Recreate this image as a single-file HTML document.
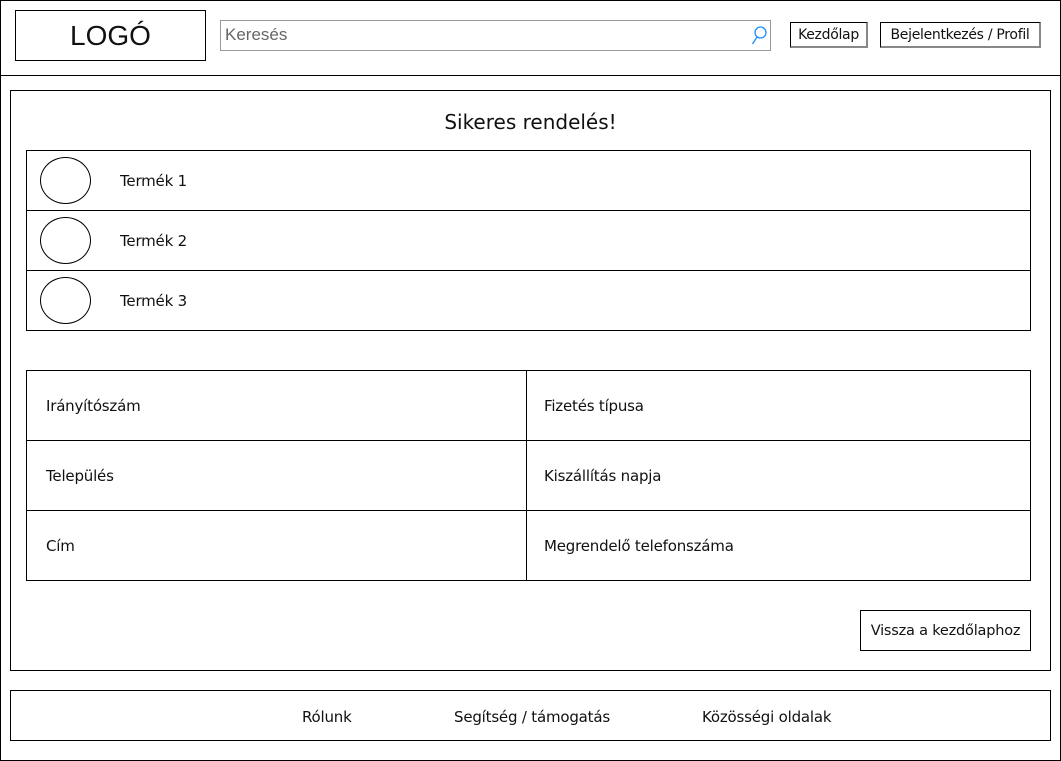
<!DOCTYPE html>
<html><head><meta charset="utf-8"><style>
*{box-sizing:border-box;margin:0;padding:0}
body{width:1061px;height:761px;position:relative;background:#fff;font-family:"DejaVu Sans","Liberation Sans",sans-serif;color:#111;overflow:hidden}
.a{position:absolute}
.b{position:absolute;border:1px solid #000}
.t{position:absolute;font-size:15px;line-height:16px;white-space:nowrap;letter-spacing:-0.2px}
</style></head><body>
<div class="b" style="left:0;top:0;width:1061px;height:761px"></div>
<div class="a" style="left:0;top:75px;width:1061px;height:1px;background:#000"></div>
<div class="b" style="left:15px;top:10px;width:191px;height:51px;font-family:'Liberation Sans',sans-serif;font-size:28px;text-align:center;line-height:49px">LOGÓ</div>
<div class="a" style="left:220px;top:20px;width:551px;height:31px;border:1px solid #999"></div>
<div class="a" style="left:225px;top:25px;font-family:'Liberation Sans',sans-serif;font-size:17px;color:#666;line-height:20px">Keresés</div>
<svg class="a" style="left:750px;top:25px" width="18" height="22" viewBox="0 0 18 22"><circle cx="10.5" cy="7.5" r="5.5" fill="none" stroke="#1e90ff" stroke-width="1.3"/><path d="M7 12 L2.5 19" stroke="#1e90ff" stroke-width="1.3"/></svg>
<div class="b" style="left:790px;top:22px;width:78px;height:26px;border-bottom:2px solid #888;border-right:2px solid #888;font-size:14px;line-height:24px;text-align:center;letter-spacing:-0.3px">Kezdőlap</div>
<div class="b" style="left:880px;top:22px;width:161px;height:26px;border-bottom:2px solid #888;border-right:2px solid #888;font-size:14px;line-height:24px;text-align:center;letter-spacing:-0.3px">Bejelentkezés / Profil</div>

<div class="b" style="left:10px;top:90px;width:1041px;height:581px"></div>
<div class="a" style="left:10px;top:110px;width:1041px;text-align:center;font-size:20px;line-height:24px">Sikeres rendelés!</div>

<div class="b" style="left:26px;top:150px;width:1005px;height:181px"></div>
<div class="a" style="left:26px;top:210px;width:1005px;height:1px;background:#000"></div>
<div class="a" style="left:26px;top:270px;width:1005px;height:1px;background:#000"></div>
<div class="b" style="left:40px;top:157px;width:51px;height:47px;border-radius:50%"></div>
<div class="b" style="left:40px;top:217px;width:51px;height:47px;border-radius:50%"></div>
<div class="b" style="left:40px;top:277px;width:51px;height:47px;border-radius:50%"></div>
<div class="t" style="left:120px;top:173px">Termék 1</div>
<div class="t" style="left:120px;top:233px">Termék 2</div>
<div class="t" style="left:120px;top:293px">Termék 3</div>

<div class="b" style="left:26px;top:370px;width:1005px;height:211px"></div>
<div class="a" style="left:26px;top:440px;width:1005px;height:1px;background:#000"></div>
<div class="a" style="left:26px;top:510px;width:1005px;height:1px;background:#000"></div>
<div class="a" style="left:526px;top:370px;width:1px;height:211px;background:#000"></div>
<div class="t" style="left:46px;top:398px">Irányítószám</div>
<div class="t" style="left:46px;top:468px">Település</div>
<div class="t" style="left:46px;top:538px">Cím</div>
<div class="t" style="left:544px;top:398px">Fizetés típusa</div>
<div class="t" style="left:544px;top:468px">Kiszállítás napja</div>
<div class="t" style="left:544px;top:538px">Megrendelő telefonszáma</div>

<div class="b" style="left:860px;top:610px;width:171px;height:41px;font-size:14.5px;line-height:40px;text-align:center;letter-spacing:-0.2px">Vissza a kezdőlaphoz</div>

<div class="b" style="left:10px;top:690px;width:1041px;height:51px"></div>
<div class="t" style="left:302px;top:709px">Rólunk</div>
<div class="t" style="left:454px;top:709px">Segítség / támogatás</div>
<div class="t" style="left:702px;top:709px">Közösségi oldalak</div>
</body></html>
